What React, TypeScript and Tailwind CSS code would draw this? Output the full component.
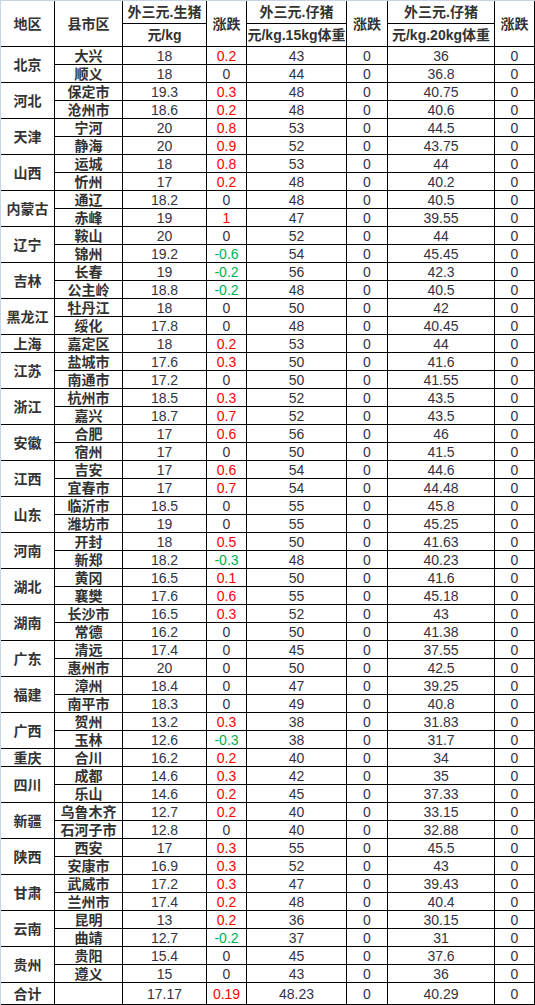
import React from "react";

type Row = [string, number | string, number | string, number | string, number | string, number | string, number | string];
type Group = [string, Row[]];

const data: Group[] = [
  ["北京", [["大兴", 18, 0.2, 43, 0, 36, 0], ["顺义", 18, 0, 44, 0, 36.8, 0]]],
  ["河北", [["保定市", 19.3, 0.3, 48, 0, 40.75, 0], ["沧州市", 18.6, 0.2, 48, 0, 40.6, 0]]],
  ["天津", [["宁河", 20, 0.8, 53, 0, 44.5, 0], ["静海", 20, 0.9, 52, 0, 43.75, 0]]],
  ["山西", [["运城", 18, 0.8, 53, 0, 44, 0], ["忻州", 17, 0.2, 48, 0, 40.2, 0]]],
  ["内蒙古", [["通辽", 18.2, 0, 48, 0, 40.5, 0], ["赤峰", 19, 1, 47, 0, 39.55, 0]]],
  ["辽宁", [["鞍山", 20, 0, 52, 0, 44, 0], ["锦州", 19.2, -0.6, 54, 0, 45.45, 0]]],
  ["吉林", [["长春", 19, -0.2, 56, 0, 42.3, 0], ["公主岭", 18.8, -0.2, 48, 0, 40.5, 0]]],
  ["黑龙江", [["牡丹江", 18, 0, 50, 0, 42, 0], ["绥化", 17.8, 0, 48, 0, 40.45, 0]]],
  ["上海", [["嘉定区", 18, 0.2, 53, 0, 44, 0]]],
  ["江苏", [["盐城市", 17.6, 0.3, 50, 0, 41.6, 0], ["南通市", 17.2, 0, 50, 0, 41.55, 0]]],
  ["浙江", [["杭州市", 18.5, 0.3, 52, 0, 43.5, 0], ["嘉兴", 18.7, 0.7, 52, 0, 43.5, 0]]],
  ["安徽", [["合肥", 17, 0.6, 56, 0, 46, 0], ["宿州", 17, 0, 50, 0, 41.5, 0]]],
  ["江西", [["吉安", 17, 0.6, 54, 0, 44.6, 0], ["宜春市", 17, 0.7, 54, 0, 44.48, 0]]],
  ["山东", [["临沂市", 18.5, 0, 55, 0, 45.8, 0], ["潍坊市", 19, 0, 55, 0, 45.25, 0]]],
  ["河南", [["开封", 18, 0.5, 50, 0, 41.63, 0], ["新郑", 18.2, -0.3, 48, 0, 40.23, 0]]],
  ["湖北", [["黄冈", 16.5, 0.1, 50, 0, 41.6, 0], ["襄樊", 17.6, 0.6, 55, 0, 45.18, 0]]],
  ["湖南", [["长沙市", 16.5, 0.3, 52, 0, 43, 0], ["常德", 16.2, 0, 50, 0, 41.38, 0]]],
  ["广东", [["清远", 17.4, 0, 45, 0, 37.55, 0], ["惠州市", 20, 0, 50, 0, 42.5, 0]]],
  ["福建", [["漳州", 18.4, 0, 47, 0, 39.25, 0], ["南平市", 18.3, 0, 49, 0, 40.8, 0]]],
  ["广西", [["贺州", 13.2, 0.3, 38, 0, 31.83, 0], ["玉林", 12.6, -0.3, 38, 0, 31.7, 0]]],
  ["重庆", [["合川", 16.2, 0.2, 40, 0, 34, 0]]],
  ["四川", [["成都", 14.6, 0.3, 42, 0, 35, 0], ["乐山", 14.6, 0.2, 45, 0, 37.33, 0]]],
  ["新疆", [["乌鲁木齐", 12.7, 0.2, 40, 0, 33.15, 0], ["石河子市", 12.8, 0, 40, 0, 32.88, 0]]],
  ["陕西", [["西安", 17, 0.3, 55, 0, 45.5, 0], ["安康市", 16.9, 0.3, 52, 0, 43, 0]]],
  ["甘肃", [["武威市", 17.2, 0.3, 47, 0, 39.43, 0], ["兰州市", 17.4, 0.2, 48, 0, 40.4, 0]]],
  ["云南", [["昆明", 13, 0.2, 36, 0, 30.15, 0], ["曲靖", 12.7, -0.2, 37, 0, 31, 0]]],
  ["贵州", [["贵阳", 15.4, 0, 45, 0, 37.6, 0], ["遵义", 15, 0, 43, 0, 36, 0]]],
];

const cell = "bg-white flex items-center justify-center whitespace-nowrap leading-none";
const cn = "font-bold text-[14px] text-[#333333]";
const num = "text-[14px] text-[#333344]";

function Change({ v }: { v: number | string }) {
  const n = Number(v);
  const color = n > 0 ? "text-[#ff0000]" : n < 0 ? "text-[#00b050]" : "text-[#333344]";
  return <div className={`${cell} text-[14px] ${color}`}>{String(v)}</div>;
}

function Num({ v }: { v: number | string }) {
  return <div className={`${cell} ${num}`}>{String(v)}</div>;
}

export default function App() {
  return (
    <div
      className="w-[535px] h-[1005px] grid grid-cols-[53px_67px_83px_39px_99px_40px_106px_39px] grid-rows-[22px_22px_repeat(52,17px)_21px] gap-px bg-black border-l border-t border-[#c8d3e6] pr-px pb-px"
      style={{ fontFamily: '"Liberation Sans", Arial, "Noto Sans CJK SC", sans-serif' }}
    >
      <div className={`${cell} ${cn} row-span-2`}>地区</div>
      <div className={`${cell} ${cn} row-span-2`}>县市区</div>
      <div className={`${cell} ${cn}`}>外三元.生猪</div>
      <div className={`${cell} ${cn} row-span-2`}>涨跌</div>
      <div className={`${cell} ${cn}`}>外三元.仔猪</div>
      <div className={`${cell} ${cn} row-span-2`}>涨跌</div>
      <div className={`${cell} ${cn}`}>外三元.仔猪</div>
      <div className={`${cell} ${cn} row-span-2`}>涨跌</div>
      <div className={`${cell} ${cn}`}>元/kg</div>
      <div className={`${cell} ${cn}`}>元/kg.15kg体重</div>
      <div className={`${cell} ${cn}`}>元/kg.20kg体重</div>

      {data.map(([prov, rows]) => (
        <React.Fragment key={prov}>
          <div className={`${cell} ${cn} ${rows.length === 2 ? "row-span-2" : ""}`}>{prov}</div>
          {rows.map((r) => (
            <React.Fragment key={r[0]}>
              <div className={`${cell} ${cn}`}>{r[0]}</div>
              <Num v={r[1]} />
              <Change v={r[2]} />
              <Num v={r[3]} />
              <Change v={r[4]} />
              <Num v={r[5]} />
              <Change v={r[6]} />
            </React.Fragment>
          ))}
        </React.Fragment>
      ))}

      <div className={`${cell} ${cn}`}>合计</div>
      <div className={cell}></div>
      <Num v="17.17" />
      <Change v="0.19" />
      <Num v="48.23" />
      <Change v="0" />
      <Num v="40.29" />
      <Change v="0" />
    </div>
  );
}
